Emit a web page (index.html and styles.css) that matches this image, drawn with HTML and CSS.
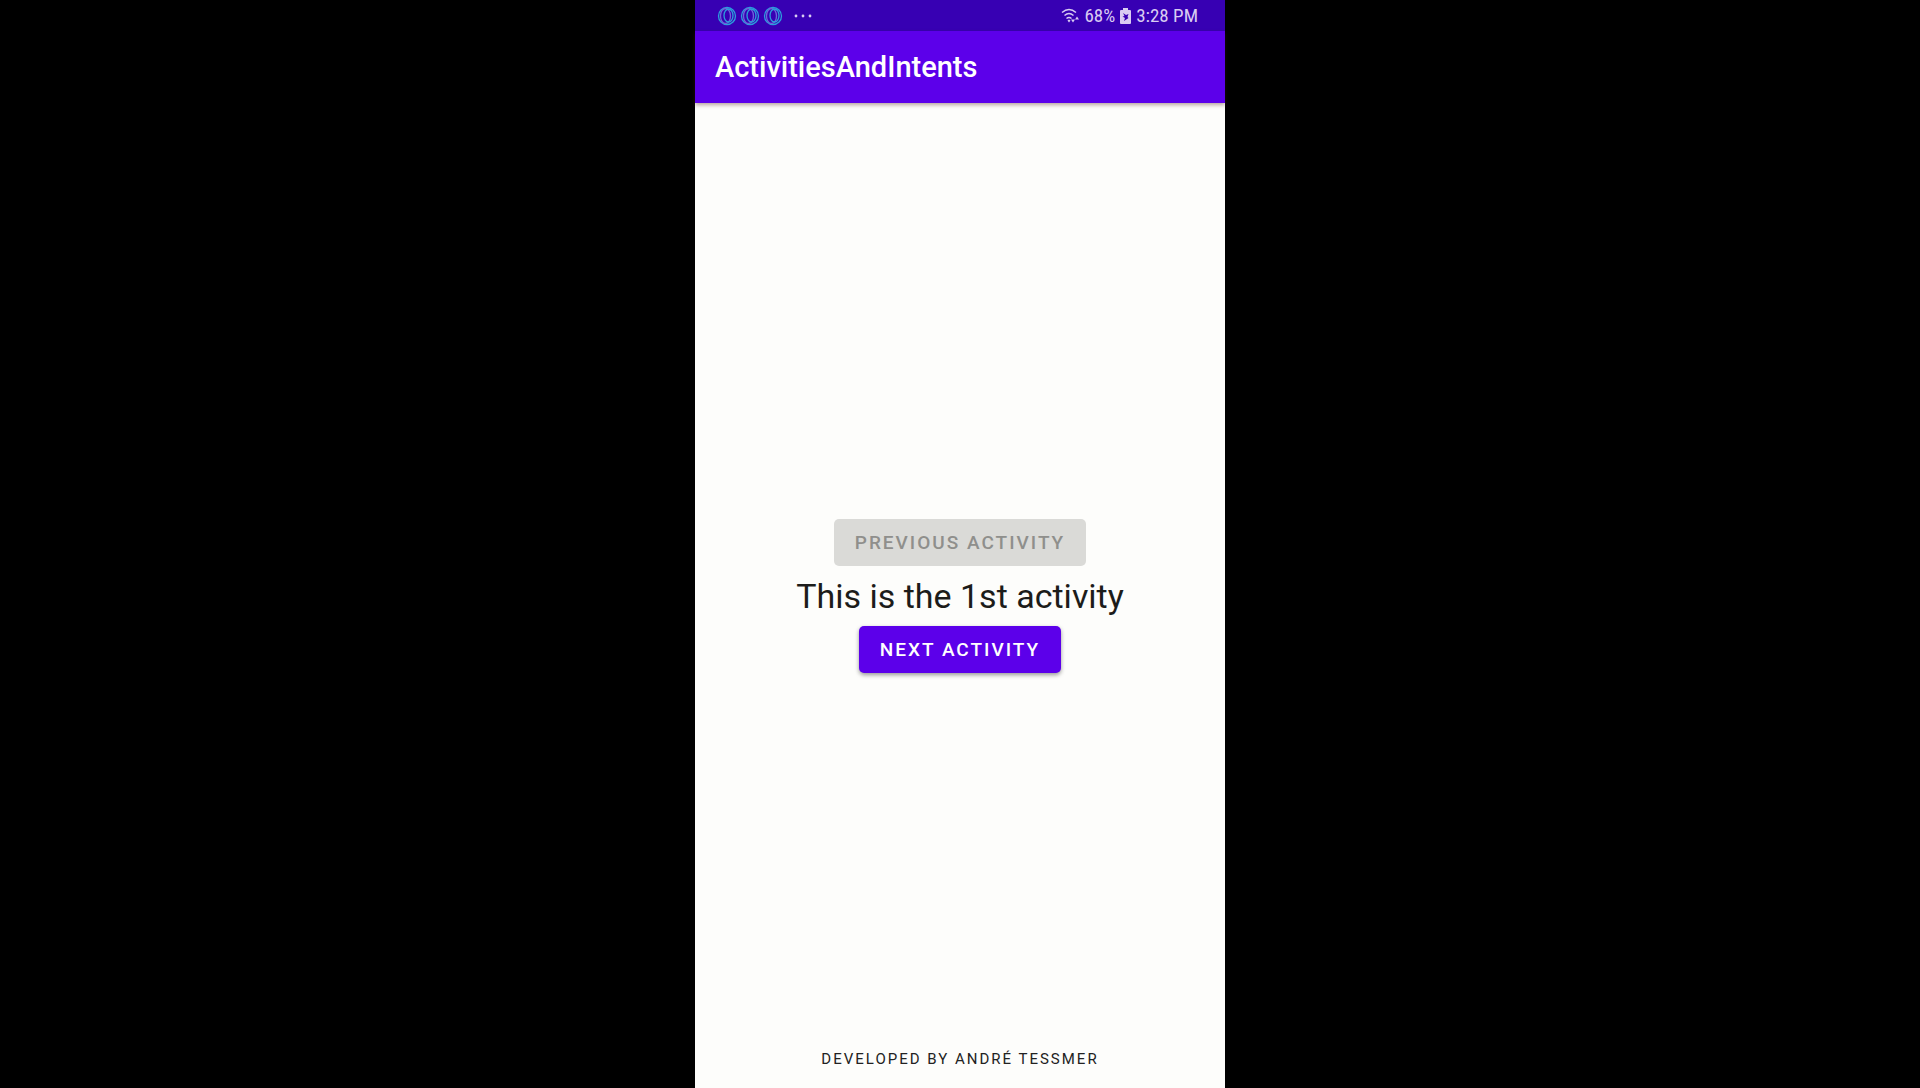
FILE: index.html
```html
<!DOCTYPE html>
<html lang="en">
<head>
<meta charset="utf-8">
<meta name="viewport" content="width=device-width, initial-scale=1">
<title>ActivitiesAndIntents</title>
<link rel="stylesheet" href="styles.css">
</head>
<body>
<div class="phone">
  <div class="status-bar">
    <div class="notifications">
      <svg class="ring" viewBox="0 0 20 20" aria-hidden="true"><circle cx="10" cy="10" r="8.5"/><ellipse class="violet" cx="8.5" cy="10" rx="5" ry="7.5"/><ellipse cx="11.500" cy="9.500" rx="4.500" ry="6.500"/></svg>
      <svg class="ring" viewBox="0 0 20 20" aria-hidden="true"><circle cx="10" cy="10" r="8.5"/><ellipse class="violet" cx="8.5" cy="10" rx="5" ry="7.5"/><ellipse cx="11.500" cy="9.500" rx="4.500" ry="6.500"/></svg>
      <svg class="ring" viewBox="0 0 20 20" aria-hidden="true"><circle cx="10" cy="10" r="8.5"/><ellipse class="violet" cx="8.5" cy="10" rx="5" ry="7.5"/><ellipse cx="11.500" cy="9.500" rx="4.500" ry="6.500"/></svg>
      <svg class="more" viewBox="0 0 18 4" aria-hidden="true"><circle cx="2" cy="2" r="1.4"/><circle cx="9" cy="2" r="1.4"/><circle cx="16" cy="2" r="1.4"/></svg>
    </div>
    <div class="system">
      <svg class="wifi" viewBox="0 0 18 16" aria-hidden="true"><path class="arc" d="M1 4.5Q8 -1.5 15 4.5M3.500 7.500Q8 3.500 12.500 7.500M5.500 10.500Q8 8.500 10.500 10.500"/><path d="M6.500 12.500L8 11.500L9.500 12.500L8 14.500ZM10 11.500H14L12 14.500ZM14 11.500L16 8.500L18 11.500Z"/></svg>
      <span>68%</span>
      <svg class="battery" viewBox="0 0 11 16" aria-hidden="true"><path d="M3 0H8V2H10Q11 2 11 3V15Q11 16 10 16H1Q0 16 0 15V3Q0 2 1 2H3Z"/><path class="bolt" d="M3 5L6 7L8.500 6L7.500 9L8.500 10L4 13L5 10L2.500 8.500L4.500 8Z"/></svg>
      <span>3:28 PM</span>
    </div>
  </div>
  <header class="app-bar"><h1 class="title">ActivitiesAndIntents</h1></header>
  <main class="content">
    <div class="activity">
      <button class="button" type="button" disabled>PREVIOUS ACTIVITY</button>
      <p class="message">This is the 1st activity</p>
      <button class="button" type="button">NEXT ACTIVITY</button>
    </div>
    <footer class="credit">DEVELOPED BY ANDRÉ TESSMER</footer>
  </main>
</div>
</body>
</html>
```
FILE: styles.css
```css
* {
  box-sizing: border-box;
}

body {
  margin: 0;
  background: #000;
  font-family: Roboto, sans-serif;
}

.phone {
  display: flex;
  flex-direction: column;
  width: 100%;
  max-width: 530px;
  min-height: 100vh;
  margin: 0 auto;
  background: #fdfdfb;
}

.status-bar {
  display: flex;
  align-items: center;
  justify-content: space-between;
  height: 31px;
  padding: 0 27px 0 22px;
  background: #3700b3;
  color: #d9ccf2;
  font-family: "Roboto Condensed", Roboto, sans-serif;
  font-size: 19px;
}

.notifications,
.system {
  display: flex;
  align-items: center;
}

.notifications {
  gap: 3px;
}

.system {
  gap: 5px;
}

.ring {
  width: 20px;
  height: 20px;
  fill: none;
  stroke: #2b9fdc;
  stroke-width: 1.3;
}

.ring .violet {
  stroke: #6f63dc;
}

.more {
  width: 18px;
  height: 4px;
  margin-left: 8px;
  fill: #d9ccf2;
}

.wifi {
  width: 18px;
  height: 16px;
  fill: #d9ccf2;
}

.wifi .arc {
  fill: none;
  stroke: #d9ccf2;
  stroke-width: 1.5;
}

.battery {
  width: 11px;
  height: 16px;
  fill: #d9ccf2;
}

.battery .bolt {
  fill: #3700b3;
}

.app-bar {
  display: flex;
  align-items: center;
  height: 72px;
  padding: 0 20px;
  background: #5c00ea;
  box-shadow: 0 2px 4px rgb(80 30 20 / 40%);
}

.title {
  margin: 0;
  color: #fff;
  font-size: 29px;
  font-weight: 500;
}

.content {
  display: grid;
  flex: 1;
  grid-template-rows: 1fr auto 1fr;
  justify-items: center;
}

.activity {
  display: flex;
  grid-row: 2;
  flex-direction: column;
  align-items: center;
}

.button {
  height: 47px;
  padding: 0 21px;
  border: 0;
  border-radius: 5px;
  background: #5c00ea;
  box-shadow: 0 2px 4px rgb(0 0 0 / 40%);
  color: #fff;
  font-family: inherit;
  font-size: 19px;
  font-weight: 500;
  letter-spacing: 2px;
}

.button:disabled {
  background: #dadad7;
  box-shadow: none;
  color: #8f8f8c;
}

.message {
  margin: 0;
  color: #1c1c1a;
  font-size: 34px;
  line-height: 60px;
}

.credit {
  grid-row: 3;
  align-self: end;
  padding-bottom: 20px;
  color: #222;
  font-size: 15px;
  line-height: 18px;
  letter-spacing: 2px;
}
```
